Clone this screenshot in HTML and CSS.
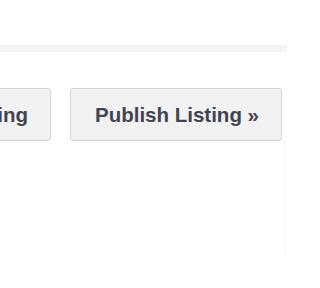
FILE: index.html
```html
<!DOCTYPE html>
<html>
<head>
<meta charset="utf-8">
<link rel="stylesheet" href="styles.css">
</head>
<body>
<div class="page">
  <div class="band"></div>
  <div class="actions">
    <button class="btn">Save Listing</button>
    <button class="btn">Publish Listing &raquo;</button>
  </div>
  <div class="panel"></div>
</div>
</body>
</html>
```
FILE: styles.css
```css
html, body {
  margin: 0;
  padding: 0;
  background: #ffffff;
  overflow: hidden;
}
.page {
  width: 288px;
  height: 288px;
  overflow: hidden;
  padding-top: 45px;
  box-sizing: border-box;
}
.band {
  height: 7px;
  margin-right: 1px;
  background: linear-gradient(#f2f2f2, #f6f6f6);
}
.actions {
  display: flex;
  justify-content: flex-end;
  gap: 19px;
  margin-top: 36px;
  padding-right: 6px;
}
.btn {
  flex: none;
  box-sizing: border-box;
  height: 53px;
  padding: 0 22px 0 24px;
  border: 1px solid #d6d6d6;
  border-radius: 3px;
  background: #f2f2f2;
  color: #404551;
  font-family: "Liberation Sans", Arial, sans-serif;
  font-weight: bold;
  font-size: 20.5px;
  line-height: 24px;
  white-space: nowrap;
}
.panel {
  height: 114px;
  margin-right: 3px;
  border-right: 1px solid #f4f4f4;
}
```
